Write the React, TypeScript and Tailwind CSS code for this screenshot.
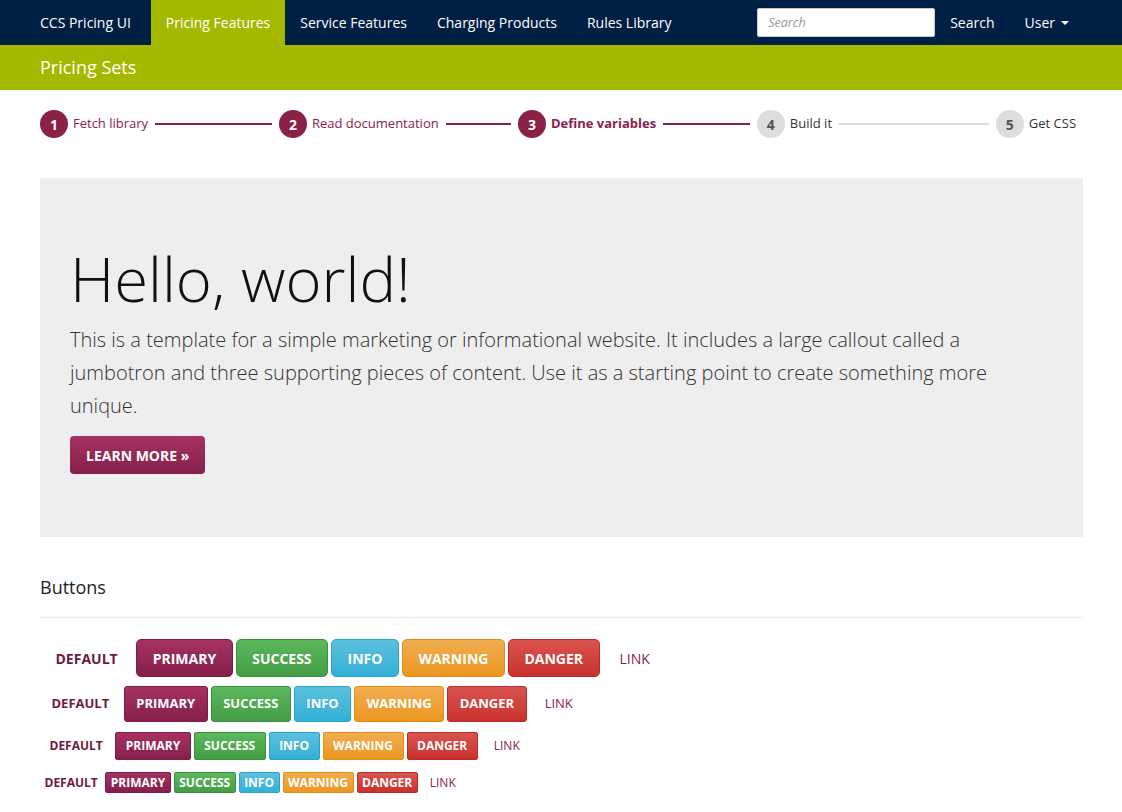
const steps = [
  { n: 1, label: "Fetch library", state: "done" },
  { n: 2, label: "Read documentation", state: "done" },
  { n: 3, label: "Define variables", state: "current" },
  { n: 4, label: "Build it", state: "todo" },
  { n: 5, label: "Get CSS", state: "todo" },
]

const variants = [
  { label: "PRIMARY", cls: "bg-gradient-to-b from-[#a63262] to-[#85204a] border-[#7c1d44]" },
  { label: "SUCCESS", cls: "bg-gradient-to-b from-[#5cb85c] to-[#449d44] border-[#3e8f3e]" },
  { label: "INFO", cls: "bg-gradient-to-b from-[#5bc0de] to-[#31b0d5] border-[#28a4c9]" },
  { label: "WARNING", cls: "bg-gradient-to-b from-[#f0ad4e] to-[#ec971f] border-[#e38d13]" },
  { label: "DANGER", cls: "bg-gradient-to-b from-[#d9534f] to-[#c9302c] border-[#b92c28]" },
]

const sizes = [
  { btn: "h-[38px] px-[15.5px] rounded-[5px]", text: "text-[14px]", link: "ml-[17px]", row: "mt-[21px]" },
  { btn: "h-[36px] px-[11.5px] rounded-[3px]", text: "text-[13px]", link: "ml-[15px]", row: "mt-[9px]" },
  { btn: "h-[28px] px-[9.5px] rounded-[2px]", text: "text-[12px]", link: "ml-[13px]", row: "mt-[10px]" },
  { btn: "h-[21px] px-[4.5px] rounded-[2px]", text: "text-[12px]", link: "ml-[9px]", row: "mt-[12px]" },
]

const Stepper = () => (
  <div className="flex items-center pt-[20px] pb-[40px] pr-[7px] text-[13px]">
    {steps.map((s, i) => (
      <div key={s.n} className={`flex items-center ${i < steps.length - 1 ? "flex-1" : ""}`}>
        <span
          className={`flex h-[28px] w-[28px] shrink-0 items-center justify-center rounded-full text-[14px] font-bold ${
            s.state === "todo" ? "bg-[#dddddd] text-[#555]" : "bg-[#8a2247] text-white"
          }`}
        >
          {s.n}
        </span>
        <span
          className={`ml-[5px] whitespace-nowrap ${
            s.state === "done" ? "text-[#8a2247]" : s.state === "current" ? "font-bold text-[#8a2247]" : "text-[#333]"
          }`}
        >
          {s.label}
        </span>
        {i < steps.length - 1 && (
          <span
            className={`mx-[7px] h-[2px] flex-1 ${s.state === "todo" ? "bg-[#dddddd]" : "bg-[#8a2247]"}`}
          />
        )}
      </div>
    ))}
  </div>
)

export default function App() {
  return (
    <div className="min-h-screen bg-white text-[#333]" style={{ fontFamily: '"Open Sans", "Liberation Sans", sans-serif' }}>
      <nav className="flex h-[45px] items-stretch bg-[#001f45] text-[14px] text-white">
        <a className="flex items-center pl-[40px] pr-[20px]">CCS Pricing UI</a>
        <a className="flex items-center bg-[#a5b800] px-[15px]">Pricing Features</a>
        <a className="flex items-center px-[15px]">Service Features</a>
        <a className="flex items-center px-[15px]">Charging Products</a>
        <a className="flex items-center px-[15px]">Rules Library</a>
        <div className="ml-auto flex items-center pr-[53px]">
          <input
            placeholder="Search"
            className="h-[29px] w-[178px] rounded-[2px] border border-[#ccc] bg-white px-[10px] text-[12.5px] italic text-[#555] placeholder:text-[#999] outline-none"
          />
          <a className="flex items-center pl-[15px] pr-[15px]">Search</a>
          <a className="flex items-center pl-[15px]">
            User
            <span className="ml-[6px] mt-[1px] h-0 w-0 border-x-[4px] border-t-[4px] border-x-transparent border-t-white" />
          </a>
        </div>
      </nav>
      <div className="flex h-[45px] items-center bg-[#a5b800] pl-[40px] text-[18px] text-white">Pricing Sets</div>

      <main className="px-[40px] pr-[39px]">
        <Stepper />

        <section className="bg-[#eeeeee] px-[30px] pt-[66px] pb-[63px]">
          <h1 className="text-[61.5px] font-light leading-[69px] text-[#111]">Hello, world!</h1>
          <p className="mt-[10px] text-[20px] font-light leading-[33px] text-[#333]">
            This is a template for a simple marketing or informational website. It includes a large callout called a
            jumbotron and three supporting pieces of content. Use it as a starting point to create something more
            unique.
          </p>
          <button className="mt-[14px] h-[38px] rounded-[4px] bg-gradient-to-b from-[#a63262] to-[#85204a] px-[16px] text-[14px] font-bold text-white">
            LEARN MORE »
          </button>
        </section>

        <h2 className="mt-[37px] text-[18px] leading-[26px] text-[#222]">Buttons</h2>
        <hr className="mt-[17px] border-t border-[#eeeeee]" />

        {sizes.map((sz, i) => (
          <div key={i} className={`flex items-center gap-[3px] ${sz.row}`}>
            <button className={`${sz.btn} ${sz.text} font-bold text-[#6f1a3b]`}>DEFAULT</button>
            {variants.map((v) => (
              <button key={v.label} className={`${sz.btn} ${sz.text} ${v.cls} border font-bold text-white`}>
                {v.label}
              </button>
            ))}
            <a className={`${sz.link} ${sz.text} text-[#8a2247]`}>LINK</a>
          </div>
        ))}
      </main>
    </div>
  )
}
